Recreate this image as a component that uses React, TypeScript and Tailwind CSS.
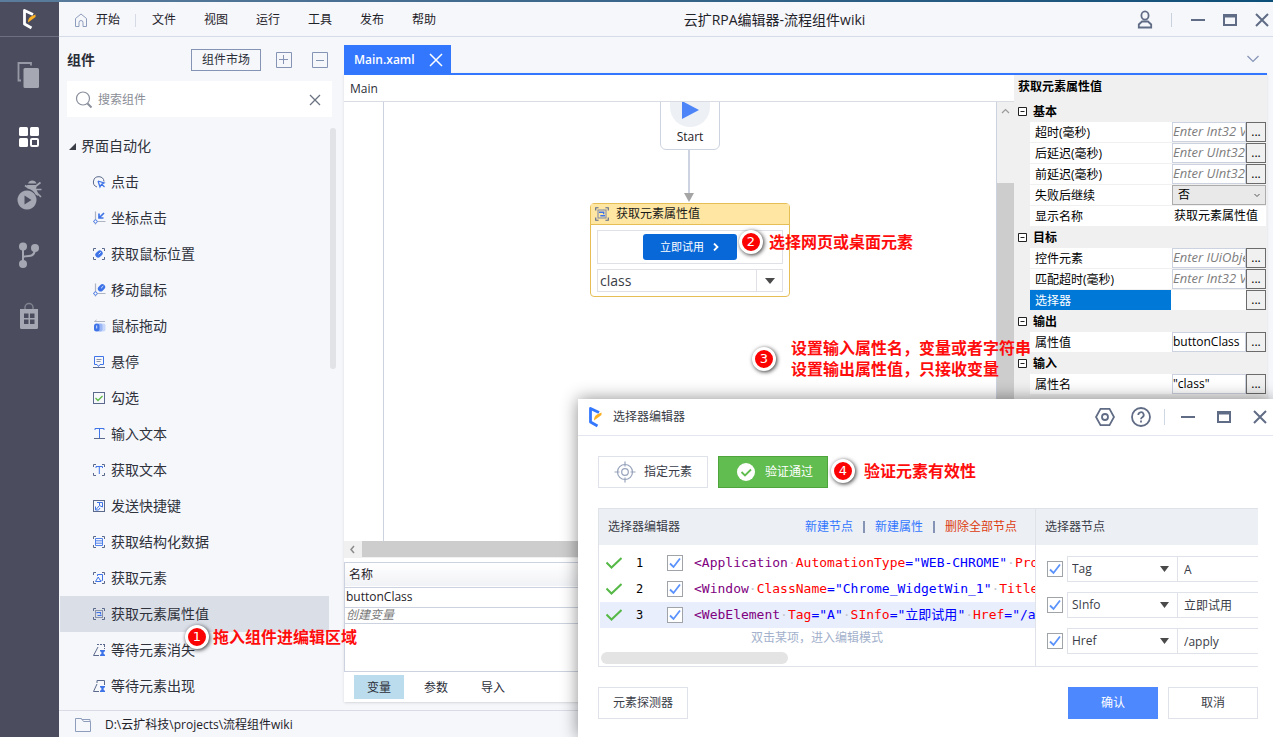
import { useState } from 'react';
import type { ReactNode } from 'react';

type IconName =
  | 'click'
  | 'coordClick'
  | 'mousePos'
  | 'moveMouse'
  | 'drag'
  | 'hover'
  | 'check'
  | 'typeText'
  | 'getText'
  | 'hotkey'
  | 'getData'
  | 'getElement'
  | 'getAttr'
  | 'waitGone'
  | 'waitShow';

interface Activity {
  label: string;
  icon: IconName;
}

interface Property {
  label: string;
  kind: 'input' | 'select' | 'text';
  value?: string;
  placeholder?: string;
  active?: boolean;
}

interface PropertyGroup {
  name: string;
  items: Property[];
}

const menus = ['文件', '视图', '运行', '工具', '发布', '帮助'];

const activities: Activity[] = [
  { label: '点击', icon: 'click' },
  { label: '坐标点击', icon: 'coordClick' },
  { label: '获取鼠标位置', icon: 'mousePos' },
  { label: '移动鼠标', icon: 'moveMouse' },
  { label: '鼠标拖动', icon: 'drag' },
  { label: '悬停', icon: 'hover' },
  { label: '勾选', icon: 'check' },
  { label: '输入文本', icon: 'typeText' },
  { label: '获取文本', icon: 'getText' },
  { label: '发送快捷键', icon: 'hotkey' },
  { label: '获取结构化数据', icon: 'getData' },
  { label: '获取元素', icon: 'getElement' },
  { label: '获取元素属性值', icon: 'getAttr' },
  { label: '等待元素消失', icon: 'waitGone' },
  { label: '等待元素出现', icon: 'waitShow' },
];

const propertyGroups: PropertyGroup[] = [
  {
    name: '基本',
    items: [
      { label: '超时(毫秒)', kind: 'input', placeholder: 'Enter Int32 VB expression' },
      { label: '后延迟(毫秒)', kind: 'input', placeholder: 'Enter UInt32 VB expression' },
      { label: '前延迟(毫秒)', kind: 'input', placeholder: 'Enter UInt32 VB expression' },
      { label: '失败后继续', kind: 'select', value: '否' },
      { label: '显示名称', kind: 'text', value: '获取元素属性值' },
    ],
  },
  {
    name: '目标',
    items: [
      { label: '控件元素', kind: 'input', placeholder: 'Enter IUiObject VB expression' },
      { label: '匹配超时(毫秒)', kind: 'input', placeholder: 'Enter Int32 VB expression' },
      { label: '选择器', kind: 'input', active: true },
    ],
  },
  { name: '输出', items: [{ label: '属性值', kind: 'input', value: 'buttonClass' }] },
  { name: '输入', items: [{ label: '属性名', kind: 'input', value: '"class"' }] },
];

const selectorNodes = [
  { tag: 'Application', attrs: [['AutomationType', 'WEB-CHROME'], ['ProcessName', 'chrome']] },
  { tag: 'Window', attrs: [['ClassName', 'Chrome_WidgetWin_1'], ['Title', '*']] },
  { tag: 'WebElement', attrs: [['Tag', 'A'], ['SInfo', '立即试用'], ['Href', '/apply']] },
];

const nodeAttrs = [
  { name: 'Tag', value: 'A' },
  { name: 'SInfo', value: '立即试用' },
  { name: 'Href', value: '/apply' },
];

function Corners() {
  return <path d="M1.5 4V1.5H4M10 1.5h2.500V4M12.500 10v2.500H10M4 12.500H1.500V10" stroke="#5b6a8c" />;
}

function Mouse({ x, y }: { x: number; y: number }) {
  return (
    <g transform={`rotate(45 ${x} ${y})`}>
      <rect x={x - 2.8} y={y - 4} width="5.600" height="8" rx="2.800" fill="#3f74e8" />
      <path d={`M${x} ${y - 2.500}v3`} stroke="#fff" strokeWidth="0.8" />
    </g>
  );
}

function Axes() {
  return (
    <>
      <path d="M3.500 0.500V13.500M1 10.500H13.500" stroke="#aeb4c2" strokeWidth="1.2" />
      <circle cx="3.500" cy="10.500" r="1.600" fill="#fff" stroke="#3f74e8" />
    </>
  );
}

function ActivityIcon({ name, className = 'size-[14px]' }: { name: IconName; className?: string }) {
  const shapes: Record<IconName, ReactNode> = {
    click: (
      <>
        <path d="M5 12A5.300 5.300 0 1 1 12 6.500" stroke="#5b6a8c" />
        <path d="M6 6l6 2-2.300 1.200L12.500 12M6 6l2 6 1.400-2.500" stroke="#3f74e8" strokeWidth="1.300" />
      </>
    ),
    coordClick: (
      <>
        <Axes />
        <path d="M12 2L7.500 6.500M7 2.500V7h4.500" stroke="#3f74e8" strokeWidth="1.700" />
      </>
    ),
    mousePos: (
      <>
        <Corners />
        <Mouse x={7} y={7} />
      </>
    ),
    moveMouse: (
      <>
        <Axes />
        <Mouse x={9.5} y={4.8} />
      </>
    ),
    drag: (
      <>
        <path d="M2.500 2.500H13M2.500 2.500l2-1.500" stroke="#aeb4c2" />
        <rect x="6" y="4.500" width="7.500" height="8" rx="2" fill="#c9d8fa" />
        <rect x="5" y="4.500" width="5.500" height="8" rx="2" fill="#9bb7f5" />
        <rect x="2" y="4.500" width="5.500" height="8" rx="2.500" fill="#3f74e8" />
        <path d="M4.700 6.500v3" stroke="#fff" strokeWidth="0.8" />
      </>
    ),
    hover: (
      <>
        <path d="M2.500 1.500h9v8H8l-1.500 2-1.500-2H2.500z" stroke="#3f74e8" />
        <path d="M4.500 4.500h5M4.500 6.500h4" stroke="#8892aa" />
        <path d="M1 12.500h12" stroke="#5b6a8c" />
      </>
    ),
    check: (
      <>
        <rect x="1.500" y="1.500" width="11" height="11" stroke="#5b6a8c" />
        <path d="M3.500 7l2.500 2.500L10.500 5" stroke="#5cb947" strokeWidth="1.300" />
      </>
    ),
    typeText: (
      <>
        <path d="M3 3V1.500h9V3M7.500 1.500V11" stroke="#3f74e8" />
        <path d="M2 11.500h11" stroke="#5b6a8c" />
      </>
    ),
    getText: (
      <>
        <Corners />
        <path d="M4 5V3.500h6.500V5M7.300 3.500V11" stroke="#3f74e8" />
      </>
    ),
    hotkey: (
      <>
        <rect x="1.500" y="1.500" width="11" height="11" stroke="#5b6a8c" />
        <path d="M5 3.500h5.500V8M7.500 3.500v3L4 10.500M10.500 8l-3-1.500" stroke="#3f74e8" />
        <path d="M3.500 7.500v3.500h3l1.500-2" stroke="#3f74e8" />
      </>
    ),
    getData: (
      <>
        <Corners />
        <path d="M3.500 3.500h7v7h-7zM3.500 5.800h7M3.500 8.200h7" stroke="#3f74e8" strokeWidth="0.9" />
      </>
    ),
    getElement: (
      <>
        <Corners />
        <path d="M5.500 5V3.500h5v6H9.500M3.500 10.500h5.500L6.200 6z" stroke="#3f74e8" />
      </>
    ),
    getAttr: (
      <>
        <Corners />
        <rect x="3.500" y="3.500" width="7" height="7" stroke="#8892aa" />
        <path d="M5 6.200V5.500h3.500v1.200H9M9 7.800v.7H5.500" stroke="#3f74e8" strokeWidth="1.200" />
      </>
    ),
    waitGone: (
      <>
        <path d="M5 1.500h8M12.500 2v4" stroke="#5b6a8c" strokeDasharray="2 1" />
        <path d="M7 12.500H1.500L6 4" stroke="#5b6a8c" />
        <path d="M8 7h5v1l-1.800 2 1.800 2v1H8v-1l1.800-2L8 8z" fill="#3f74e8" />
      </>
    ),
    waitShow: (
      <>
        <path d="M5 4V1.500h7.500V6M7 12.500H1.500L5 5" stroke="#5b6a8c" />
        <path d="M8 7h5v1l-1.800 2 1.800 2v1H8v-1l1.800-2L8 8z" fill="#3f74e8" />
      </>
    ),
  };
  return (
    <svg viewBox="0 0 14 14" fill="none" className={`${className} shrink-0`}>
      {shapes[name]}
    </svg>
  );
}

function Logo({ color }: { color: string }) {
  return (
    <svg viewBox="0 0 14 22" className="h-[22px] w-[14px]" fill="none">
      <path d="M9.500 20L2.500 16V2.500L11 6.500" stroke={color} strokeWidth="2.800" strokeLinejoin="round" />
      <path d="M13.500 6.500v2.500L6 14.500c0-3 1-5 3-6z" fill="#fdb022" />
    </svg>
  );
}

function WindowButtons() {
  return (
    <>
      <button aria-label="最小化" className="flex size-4 items-center justify-center">
        <svg viewBox="0 0 16 16" className="size-4" stroke="#606c85" strokeWidth="2">
          <path d="M1 8h14" />
        </svg>
      </button>
      <button aria-label="最大化" className="flex size-4 items-center justify-center">
        <svg viewBox="0 0 16 16" className="size-4" stroke="#606c85" fill="none">
          <rect x="2" y="3" width="12" height="10" strokeWidth="2" />
          <path d="M1 4h14" strokeWidth="3" />
        </svg>
      </button>
      <button aria-label="关闭" className="flex size-4 items-center justify-center">
        <svg viewBox="0 0 16 16" className="size-4" stroke="#606c85" strokeWidth="2">
          <path d="M2 2l12 12M14 2L2 14" />
        </svg>
      </button>
    </>
  );
}

function TitleBar() {
  return (
    <header className="flex h-[35px] shrink-0 items-center border-b border-[#d5dce8] pr-[3px] pt-[2px] text-xs text-[#1f2229]">
      <button className="flex items-center gap-2 pl-[15px] pr-[15px]">
        <svg viewBox="0 0 14 14" className="size-[14px]" fill="none" stroke="#8f9dbd">
          <path d="M1.500 5.500L7 1l5.500 4.500v8H9v-4a2 2 0 0 0-4 0v4H1.500z" />
        </svg>
        开始
      </button>
      <span className="h-[13px] w-px bg-[#d5dae5]" />
      <nav className="flex gap-7 pl-4">
        {menus.map((menu) => (
          <button key={menu} className="whitespace-nowrap">
            {menu}
          </button>
        ))}
      </nav>
      <h1 className="flex-1 truncate pr-6 text-center text-sm">云扩RPA编辑器-流程组件wiki</h1>
      <button aria-label="用户">
        <svg viewBox="0 0 16 20" className="h-5 w-4" fill="none" stroke="#606c85" strokeWidth="1.800">
          <ellipse cx="8" cy="5.500" rx="3.600" ry="4.200" />
          <path d="M1.800 17.500v-3L5 11.500h6l3.200 3v3z" />
        </svg>
      </button>
      <span className="ml-[18px] mr-[18px] h-[14px] w-px bg-[#c9d0de]" />
      <div className="flex items-center gap-4">
        <WindowButtons />
      </div>
    </header>
  );
}

function SideNav() {
  const button = 'flex h-[60px] w-full items-center justify-center';
  return (
    <nav className="flex w-[59px] shrink-0 flex-col bg-[#4b4d5f]">
      <div className="flex h-[35px] shrink-0 items-center justify-center border-b border-[#6e7080] pr-[2px]">
        <Logo color="#ffffff" />
      </div>
      <div className="pr-[2px] pt-2">
        <button aria-label="项目" className={button}>
          <svg viewBox="0 0 24 28" className="h-7 w-6" fill="#a5a8b2">
            <rect x="6.500" y="7" width="15.500" height="20" rx="1.500" />
            <path d="M14 4.500V2H1.500v17.500H4" fill="none" stroke="#9699a5" strokeWidth="1.800" />
          </svg>
        </button>
        <button aria-label="组件" className={button}>
          <svg viewBox="0 0 20 24" className="h-6 w-5" fill="#fff">
            <rect y="4" width="9" height="9" rx="1.500" />
            <rect x="11" y="4" width="9" height="9" rx="1.500" />
            <rect y="15" width="9" height="9" rx="1.500" />
            <rect x="12" y="16" width="7" height="7" rx="1" fill="none" stroke="#fff" strokeWidth="2" />
          </svg>
        </button>
        <button aria-label="调试" className={button}>
          <svg viewBox="0 0 26 32" className="h-8 w-[26px]" fill="#a5a8b2">
            <path fillRule="evenodd" d="M11 11.500a9.500 9.500 0 1 0 .01 0zM8.500 16.500l7 4.500-7 4.500z" />
            <path d="M12 4.500a4.500 4.500 0 0 1 8.500 0zM11 6h10l-1 4c1.500 2 2 4 2 7l-2.500-1.500a11 11 0 0 0-8-6z" />
            <path d="M20 7l4.500-3.500M20 10.500h5.500M20.500 13.500l4.500 4.500M9 6.500l3 2" stroke="#a5a8b2" strokeWidth="1.600" />
          </svg>
        </button>
        <button aria-label="版本" className={button}>
          <svg viewBox="0 0 22 28" className="h-7 w-[22px]" fill="#a5a8b2">
            <circle cx="5" cy="5.500" r="4" />
            <circle cx="17" cy="7" r="4" />
            <circle cx="5" cy="23" r="4" />
            <path d="M5 5v18M17 7c0 6-2 8-6 8-3 0-5 0-6 1.500" fill="none" stroke="#a5a8b2" strokeWidth="2" />
          </svg>
        </button>
        <button aria-label="市场" className={button}>
          <svg viewBox="0 0 18 28" className="h-7 w-[18px]">
            <path d="M5 9V6.500a4 4 0 0 1 8 0V9" fill="none" stroke="#7f828f" strokeWidth="1.500" />
            <path
              fillRule="evenodd"
              d="M0 8h18v18.500a1.500 1.500 0 0 1-1.500 1.500h-15A1.500 1.500 0 0 1 0 26.500zM4 12.500v4.500h4.500V12.500zM10 12.500v4.500h4.500V12.500zM4 18.500v4.500h4.500V18.500zM10 18.500v4.500h4.500V18.500z"
              fill="#a5a8b2"
            />
          </svg>
        </button>
      </div>
    </nav>
  );
}

function ActivityPanel() {
  const [query, setQuery] = useState('');
  const [selected, setSelected] = useState('获取元素属性值');

  return (
    <aside className="flex w-[285px] shrink-0 flex-col overflow-hidden">
      <div className="flex h-11 shrink-0 items-center pl-2 pr-4 pt-[2px]">
        <h2 className="flex-1 text-sm font-bold text-[#2b2e38]">组件</h2>
        <button className="h-[22px] w-[70px] border border-[#8593b5] text-xs text-[#2b2e38]">组件市场</button>
        <button aria-label="全部展开" className="ml-[15px]">
          <svg viewBox="0 0 16 16" className="size-4" fill="none" stroke="#8593b5">
            <path d="M.5.5h15v15H.5zM7.500 3v9M3 7.500h9" />
          </svg>
        </button>
        <button aria-label="全部折叠" className="ml-5">
          <svg viewBox="0 0 16 16" className="size-4" fill="none" stroke="#8593b5">
            <path d="M.5.5h15v15H.5zM4 8.500h8" />
          </svg>
        </button>
      </div>
      <div className="ml-2 mr-3 flex h-9 shrink-0 items-center bg-white pl-2 pr-[11px] pt-px">
        <svg viewBox="0 0 18 18" className="size-[18px]" fill="none" stroke="#8a8f9c" strokeWidth="1.200">
          <circle cx="8" cy="7.500" r="6.500" />
          <path d="M12.500 12.500l4 4" strokeWidth="2" />
        </svg>
        <input
          aria-label="搜索组件"
          value={query}
          onChange={(e) => setQuery(e.target.value)}
          placeholder="搜索组件"
          className="ml-[5px] min-w-0 flex-1 text-xs outline-none placeholder:text-[#8a8d95]"
        />
        <button aria-label="清空" onClick={() => setQuery('')}>
          <svg viewBox="0 0 12 12" className="size-3" stroke="#6b7282" strokeWidth="1.300">
            <path d="M1 1l10 10M11 1L1 11" />
          </svg>
        </button>
      </div>

      {/* Activity tree */}
      <div className="flex min-h-0 flex-1 pt-[11px]">
        <div className="w-[270px] overflow-hidden pl-px text-sm text-[#2f323b]">
          <button className="flex h-9 items-center gap-1 pl-2">
            <svg viewBox="0 0 9 9" className="size-[9px]" fill="#3a3d46">
              <path d="M8 1v7H1z" />
            </svg>
            界面自动化
          </button>
          <ul>
            {activities.map((item) => (
              <li key={item.label}>
                <button
                  onClick={() => setSelected(item.label)}
                  className={`flex h-9 w-full items-center gap-[5px] pl-8 ${
                    item.label === selected ? 'bg-[#dadee7]' : ''
                  }`}
                >
                  <ActivityIcon name={item.icon} />
                  {item.label}
                </button>
              </li>
            ))}
          </ul>
        </div>
        <div className="ml-px h-[241px] w-[6px] rounded-full bg-[#e1e3e6]" />
      </div>
    </aside>
  );
}

function Canvas() {
  return (
    <div className="relative min-w-0 flex-1 overflow-hidden border-l border-[#ccd2e0]">
      {/* Start node */}
      <div className="absolute -top-3 left-[276px] flex h-[60px] w-[60px] flex-col items-center justify-end rounded-md border border-[#cdd3e0] bg-white">
        <div className="flex h-[50px] w-10 shrink-0 items-center justify-center rounded-full bg-[#edf0f5]">
          <svg viewBox="0 0 18 20" className="mt-4 h-5 w-[18px]" fill="#4d85f9">
            <path d="M1 1l17 9-17 9z" />
          </svg>
        </div>
        <span className="pb-[2px] text-xs leading-5 text-[#1f2229]">Start</span>
      </div>
      <svg viewBox="0 0 10 53" className="absolute left-[300px] top-12 h-[53px] w-[10px]">
        <path d="M5 0v44" stroke="#cdd3e0" strokeWidth="2" />
        <path d="M0 43h10l-5 9z" fill="#a5a5a5" />
      </svg>

      {/* Activity node */}
      <div className="absolute left-[206px] top-[101px] w-[200px] rounded-sm border border-[#e6be56] bg-white">
        <div className="flex h-[21px] items-center gap-[6px] border-b border-[#e6be56] bg-[#ffe6a2] pl-[3px] text-xs text-[#1a1a1a]">
          <ActivityIcon name="getAttr" className="size-4" />
          获取元素属性值
        </div>
        <div className="px-[6px] pb-1 pt-[5px]">
          <div className="flex h-[34px] items-center justify-center border border-[#dfe1e6]">
            <button className="flex h-[26px] w-[94px] items-center justify-center gap-2 rounded-[3px] bg-[#0868d8] text-[11px] text-white">
              立即试用
              <svg viewBox="0 0 8 8" className="size-2" fill="none" stroke="#fff" strokeWidth="1.800">
                <path d="M2 .5L5.500 4 2 7.500" />
              </svg>
            </button>
          </div>
          <div className="mt-[5px] grid border border-[#dfe1e6]">
            <select
              aria-label="属性名称"
              className="col-start-1 row-start-1 h-[21px] appearance-none pl-[2px] text-sm leading-5 text-[#3a3d46] outline-none"
            >
              <option>class</option>
            </select>
            <span className="pointer-events-none col-start-1 row-start-1 flex w-[26px] items-center justify-center justify-self-end border-l border-[#dfe1e6]">
              <svg viewBox="0 0 10 6" className="h-[6px] w-[10px]" fill="#4a4a4a">
                <path d="M0 0h10L5 6z" />
              </svg>
            </span>
          </div>
        </div>
      </div>
    </div>
  );
}

function VariablePanel() {
  const [tab, setTab] = useState('变量');
  return (
    <>
      <div className="h-[110px] shrink-0 border-b border-l border-t border-[#ccd2e0]">
        <table className="w-full text-left text-xs text-[#1f2229]">
          <thead>
            <tr className="h-6 border-b border-[#ccd2e0] bg-linear-to-b from-white to-[#f1f2f5]">
              <th className="pl-1 font-normal">名称</th>
            </tr>
          </thead>
          <tbody>
            <tr className="h-5 border-b border-[#ccd2e0]">
              <td className="pl-px">buttonClass</td>
            </tr>
            <tr className="h-4 border-b border-[#ccd2e0]">
              <td className="pl-px italic leading-[14px] text-[#7a7a7a]">创建变量</td>
            </tr>
          </tbody>
        </table>
      </div>
      <div className="flex h-[30px] shrink-0 items-center gap-[7px] pl-[10px] text-xs text-[#2b2e38]">
        {['变量', '参数', '导入'].map((name) => (
          <button
            key={name}
            onClick={() => setTab(name)}
            className={`h-6 w-[50px] pt-px ${tab === name ? 'bg-[#bbdcec]' : ''}`}
          >
            {name}
          </button>
        ))}
      </div>
    </>
  );
}

function PropertyRow({ item }: { item: Property }) {
  return (
    <div className="flex h-[21px] border-b border-[#f0f0f0] bg-white">
      <label
        htmlFor={item.label}
        className={`w-[141px] shrink-0 truncate pl-[5px] leading-[22px] ${
          item.active ? 'bg-[#0078d7] text-white' : ''
        }`}
      >
        {item.label}
      </label>
      <div className="ml-px flex min-w-0 flex-1">
        {item.kind === 'select' && (
          <div className="grid w-full">
            <select
              id={item.label}
              className="col-start-1 row-start-1 appearance-none border border-[#acacac] bg-[#e9e9e9] pl-[5px] outline-none"
            >
              <option>{item.value}</option>
            </select>
            <svg
              viewBox="0 0 8 5"
              className="pointer-events-none col-start-1 row-start-1 mr-[5px] h-[5px] w-2 self-center justify-self-end"
              fill="none"
              stroke="#555"
            >
              <path d="M1.500 1L4 3.500 6.500 1" />
            </svg>
          </div>
        )}
        {item.kind === 'text' && (
          <input id={item.label} defaultValue={item.value} className="w-full min-w-0 pl-[2px] outline-none" />
        )}
        {item.kind === 'input' && (
          <>
            <input
              id={item.label}
              defaultValue={item.value}
              placeholder={item.placeholder}
              className={`min-w-0 flex-1 border outline-none placeholder:text-[13px] placeholder:italic placeholder:text-[#7d7d7d] ${
                item.active ? 'border-transparent' : 'border-[#ccd2e0]'
              }`}
            />
            <button
              aria-label={`编辑${item.label}`}
              className="h-5 w-5 shrink-0 border border-[#6b6b6b] bg-[#f0f0f0] leading-4"
            >
              ...
            </button>
          </>
        )}
      </div>
    </div>
  );
}

function PropertyPanel() {
  return (
    <section className="w-[253px] shrink-0 bg-[#f0f0f0] pl-4 pr-px text-xs text-black">
      <h2 className="-ml-3 h-[26px] font-bold leading-6">获取元素属性值</h2>
      {propertyGroups.map((group) => (
        <div key={group.name}>
          <h3 className="-ml-3 flex h-[21px] items-center gap-[6px] font-bold">
            <svg viewBox="0 0 9 9" className="size-[9px]" fill="#fff" stroke="#222">
              <path d="M.5.5h8v8h-8zM2.500 4.500h4" />
            </svg>
            {group.name}
          </h3>
          {group.items.map((item) => (
            <PropertyRow key={item.label} item={item} />
          ))}
        </div>
      ))}
    </section>
  );
}

function Workspace() {
  return (
    <main className="mb-2 mr-[6px] flex min-w-0 flex-1 flex-col pt-2">
      <div className="flex h-7 shrink-0 items-center justify-between pr-2">
        <div className="flex h-full items-center gap-[14px] bg-[#3377ff] pl-[10px] pr-2 pt-[2px] text-xs font-semibold text-white">
          Main.xaml
          <button aria-label="关闭标签">
            <svg viewBox="0 0 14 14" className="size-[14px]" stroke="#fff" strokeWidth="1.500">
              <path d="M1 1l12 12M13 1L1 13" />
            </svg>
          </button>
        </div>
        <button aria-label="更多标签">
          <svg viewBox="0 0 12 8" className="h-2 w-3" fill="none" stroke="#8593b5" strokeWidth="1.200">
            <path d="M.5 1L6 6.500 11.500 1" />
          </svg>
        </button>
      </div>
      <div className="flex min-h-0 flex-1 border-t-2 border-[#3377ff] bg-white shadow">
        <div className="flex min-w-0 flex-1 flex-col">
          <div className="flex h-[27px] shrink-0 items-center border-b border-[#d9dce3] pl-[6px] pt-[2px] text-xs text-[#2b2e38]">
            Main
          </div>
          <div className="flex min-h-0 flex-1">
            <div className="w-[39px] shrink-0" />
            <Canvas />
            <div className="flex w-[18px] shrink-0 flex-col border-l border-[#ccd2e0] bg-[#f0f0f0]">
              <svg viewBox="0 0 17 17" className="size-[17px]" fill="none" stroke="#9a9a9a" strokeWidth="1.200">
                <path d="M5 11L8.500 7.500 12 11" />
              </svg>
              <div className="mt-16 flex-1 bg-[#cdcdcd]" />
            </div>
          </div>
          <div className="mb-1 flex h-[17px] shrink-0 bg-[#f0f0f0]">
            <svg viewBox="0 0 17 17" className="mr-px size-[17px]" fill="none" stroke="#8a8a8a" strokeWidth="1.500">
              <path d="M10 5L7 8.500l3 3.500" />
            </svg>
            <div className="h-4 flex-1 bg-[#cdcdcd]" />
          </div>
          <VariablePanel />
        </div>
        <PropertyPanel />
      </div>
    </main>
  );
}

function TickBox({ label }: { label: string }) {
  return (
    <span className="grid size-4 shrink-0">
      <input
        type="checkbox"
        aria-label={label}
        defaultChecked
        className="peer col-start-1 row-start-1 size-4 appearance-none border border-[#a0a3a8] bg-white"
      />
      <svg
        viewBox="0 0 16 16"
        className="pointer-events-none invisible col-start-1 row-start-1 size-4 peer-checked:visible"
        fill="none"
        stroke="#5b92fb"
        strokeWidth="1.800"
      >
        <path d="M3 8.500l3.500 3.500L13 3.500" />
      </svg>
    </span>
  );
}

function Dot() {
  return <span className="text-[#c4c8d0]">·</span>;
}

function SelectorDialog() {
  const [current, setCurrent] = useState(2);

  return (
    <section
      role="dialog"
      aria-label="选择器编辑器"
      className="absolute bottom-0 left-[578px] right-0 top-[399px] flex flex-col bg-white text-xs text-[#3a3d48] shadow-[0_0_16px_rgba(0,0,0,0.45)]"
    >
      <header className="flex h-[37px] shrink-0 items-center border-b border-[#e3e6ee] pl-[10px] pr-[5px]">
        <Logo color="#3377ff" />
        <h2 className="ml-[11px] flex-1">选择器编辑器</h2>
        <button aria-label="设置">
          <svg viewBox="0 0 20 20" className="size-5" fill="none" stroke="#606c85" strokeWidth="1.800">
            <path d="M5.500 1.900h9L19 10l-4.500 8.100h-9L1 10z" />
            <circle cx="10" cy="10" r="3" />
          </svg>
        </button>
        <button aria-label="帮助" className="ml-4">
          <svg viewBox="0 0 20 20" className="size-5" fill="none" stroke="#606c85" strokeWidth="1.800">
            <circle cx="10" cy="10" r="9" />
            <path d="M7.300 8a2.700 2.700 0 1 1 4 2.300c-.9.500-1.300.9-1.300 2M10 13.500v2" />
          </svg>
        </button>
        <span className="ml-[13px] mr-[15px] h-4 w-px bg-[#cfd6e4]" />
        <div className="flex gap-5">
          <WindowButtons />
        </div>
      </header>

      <div className="flex min-h-0 flex-1 flex-col pl-5 pr-[15px] pt-5">
        <div className="flex h-8 shrink-0 gap-[10px]">
          <button className="flex w-[110px] items-center justify-center gap-2 border border-[#dfe2e8]">
            <svg viewBox="0 0 22 22" className="size-[22px]" fill="none" stroke="#97a2bb" strokeWidth="1.200">
              <circle cx="11" cy="11" r="7.500" />
              <circle cx="11" cy="11" r="3.300" />
              <path d="M11 .5v5M11 16.500v5M.5 11h5M16.500 11h5" />
            </svg>
            指定元素
          </button>
          <button className="flex w-[110px] items-center justify-center gap-[10px] border border-[#4ea53b] bg-[#61bd4f] pl-1 text-white">
            <svg viewBox="0 0 18 18" className="size-[18px]" fill="none">
              <circle cx="9" cy="9" r="9" fill="#fff" />
              <path d="M4.500 9l3.500 3.500L14 6.500" stroke="#61bd4f" strokeWidth="1.800" />
            </svg>
            验证通过
          </button>
        </div>

        <div className="mt-5 flex h-[159px] shrink-0 border-y border-[#dfe2e8]">
          <div className="flex w-[438px] shrink-0 flex-col border-x border-[#dfe2e8]">
            <div className="flex h-9 shrink-0 items-center bg-[#eceff4] pl-[9px] pr-[18px]">
              <h3 className="flex-1">选择器编辑器</h3>
              <button className="text-[#3377ff]">新建节点</button>
              <span className="mx-[10px] h-3 w-[2px] bg-[#8593b5]" />
              <button className="text-[#3377ff]">新建属性</button>
              <span className="mx-[10px] h-3 w-[2px] bg-[#8593b5]" />
              <button className="text-[#dd3c10]">删除全部节点</button>
            </div>
            <ul className="mt-[5px] pl-px">
              {selectorNodes.map((node, i) => (
                <li
                  key={node.tag}
                  onClick={() => setCurrent(i)}
                  className={`flex h-[26px] items-center overflow-hidden pl-[6px] ${
                    i === current ? 'bg-[#e8eefb]' : ''
                  }`}
                >
                  <svg viewBox="0 0 16 12" className="h-3 w-4 shrink-0" fill="none" stroke="#56b947" strokeWidth="2">
                    <path d="M.5 5.500l5 5L15.500 1" />
                  </svg>
                  <span className="ml-[14px] w-[31px] shrink-0 font-['DejaVu_Sans_Mono','Noto_Sans_CJK_SC',monospace] text-black">
                    {i + 1}
                  </span>
                  <TickBox label={node.tag} />
                  <code className="ml-[11px] whitespace-nowrap font-['DejaVu_Sans_Mono','Noto_Sans_CJK_SC',monospace] text-[13px] leading-5 text-[#0000ff]">
                    <span className="text-[#800080]">&lt;{node.tag}</span>
                    {node.attrs.map(([name, value]) => (
                      <span key={name}>
                        <Dot />
                        <span className="text-[#ff0000]">{name}</span>="{value}"
                      </span>
                    ))}
                  </code>
                </li>
              ))}
            </ul>
            <p className="text-center leading-5 text-[#a3b1cc]">双击某项，进入编辑模式</p>
            <div className="ml-[2px] mt-1 h-3 w-[187px] rounded-full bg-[#e4e4e4]" />
          </div>

          <div className="min-w-0 flex-1">
            <h3 className="h-9 bg-[#eceff4] pl-[9px] leading-9">选择器节点</h3>
            <ul className="flex flex-col gap-[10px] pl-[11px] pt-[11px]">
              {nodeAttrs.map((attr) => (
                <li key={attr.name} className="flex h-[26px] items-center">
                  <TickBox label={attr.name} />
                  <div className="ml-1 grid h-full w-[111px] shrink-0">
                    <select
                      aria-label="属性"
                      className="col-start-1 row-start-1 appearance-none border border-[#dfe2e8] pl-1 outline-none"
                    >
                      <option>{attr.name}</option>
                    </select>
                    <svg
                      viewBox="0 0 9 6"
                      className="pointer-events-none col-start-1 row-start-1 mr-[9px] h-[6px] w-[9px] self-center justify-self-end"
                      fill="#4a4a4a"
                    >
                      <path d="M0 0h9L4.500 6z" />
                    </svg>
                  </div>
                  <input
                    aria-label={`${attr.name}的值`}
                    defaultValue={attr.value}
                    className="h-full min-w-0 flex-1 border-y border-[#dfe2e8] pl-[6px] outline-none"
                  />
                </li>
              ))}
            </ul>
          </div>
        </div>

        <footer className="mt-5 flex h-8 shrink-0 gap-[10px]">
          <button className="w-[90px] border border-[#dfe2e8]">元素探测器</button>
          <button className="ml-auto w-[90px] bg-[#4d88ff] text-white">确认</button>
          <button className="w-[90px] border border-[#dfe2e8]">取消</button>
        </footer>
      </div>
    </section>
  );
}

function Callout({ step, className, children }: { step: number; className: string; children: ReactNode }) {
  return (
    <div className={`pointer-events-none absolute flex items-center whitespace-nowrap ${className}`}>
      <span className="flex size-6 shrink-0 items-center justify-center rounded-full border-[3px] border-white bg-[#fb0303] font-['DejaVu_Sans','Noto_Sans_CJK_SC',sans-serif] text-[13px] text-white shadow-[1px_1px_4px_rgba(0,0,0,0.8)]">
        {step}
      </span>
      <p className="text-base font-bold leading-[21px] text-[#ff0d0d]">{children}</p>
    </div>
  );
}

export default function App() {
  return (
    <div className="relative flex h-screen flex-col overflow-hidden bg-[#f5f7fb] font-['Open_Sans','Noto_Sans_CJK_SC',sans-serif]">
      <div className="h-[2px] shrink-0 bg-linear-to-r from-[#5b7c9c] to-[#0b4f78]" />
      <div className="flex min-h-0 flex-1">
        <SideNav />
        <div className="flex min-w-0 flex-1 flex-col">
          <TitleBar />
          <div className="flex min-h-0 flex-1">
            <ActivityPanel />
            <Workspace />
          </div>
          <footer className="flex h-[27px] shrink-0 items-center gap-[14px] border-t border-[#d9dce5] pl-4 pt-[2px] text-xs text-[#1f2229]">
            <svg viewBox="0 0 16 14" className="h-[14px] w-4" fill="none" stroke="#8f9dbd">
              <path d="M.5.5h6l2 3h7v10H.5zM6.500 1.500h8.500v2" />
            </svg>
            D:\云扩科技\projects\流程组件wiki
          </footer>
        </div>
      </div>

      <SelectorDialog />

      <Callout step={1} className="left-[185px] top-[625px] gap-1">
        拖入组件进编辑区域
      </Callout>
      <Callout step={2} className="left-[739px] top-[230px] gap-[6px]">
        选择网页或桌面元素
      </Callout>
      <Callout step={3} className="left-[752px] top-[338px] gap-[15px]">
        设置输入属性名，变量或者字符串
        <br />
        设置输出属性值，只接收变量
      </Callout>
      <Callout step={4} className="left-[831px] top-[459px] gap-[9px]">
        验证元素有效性
      </Callout>
    </div>
  );
}
